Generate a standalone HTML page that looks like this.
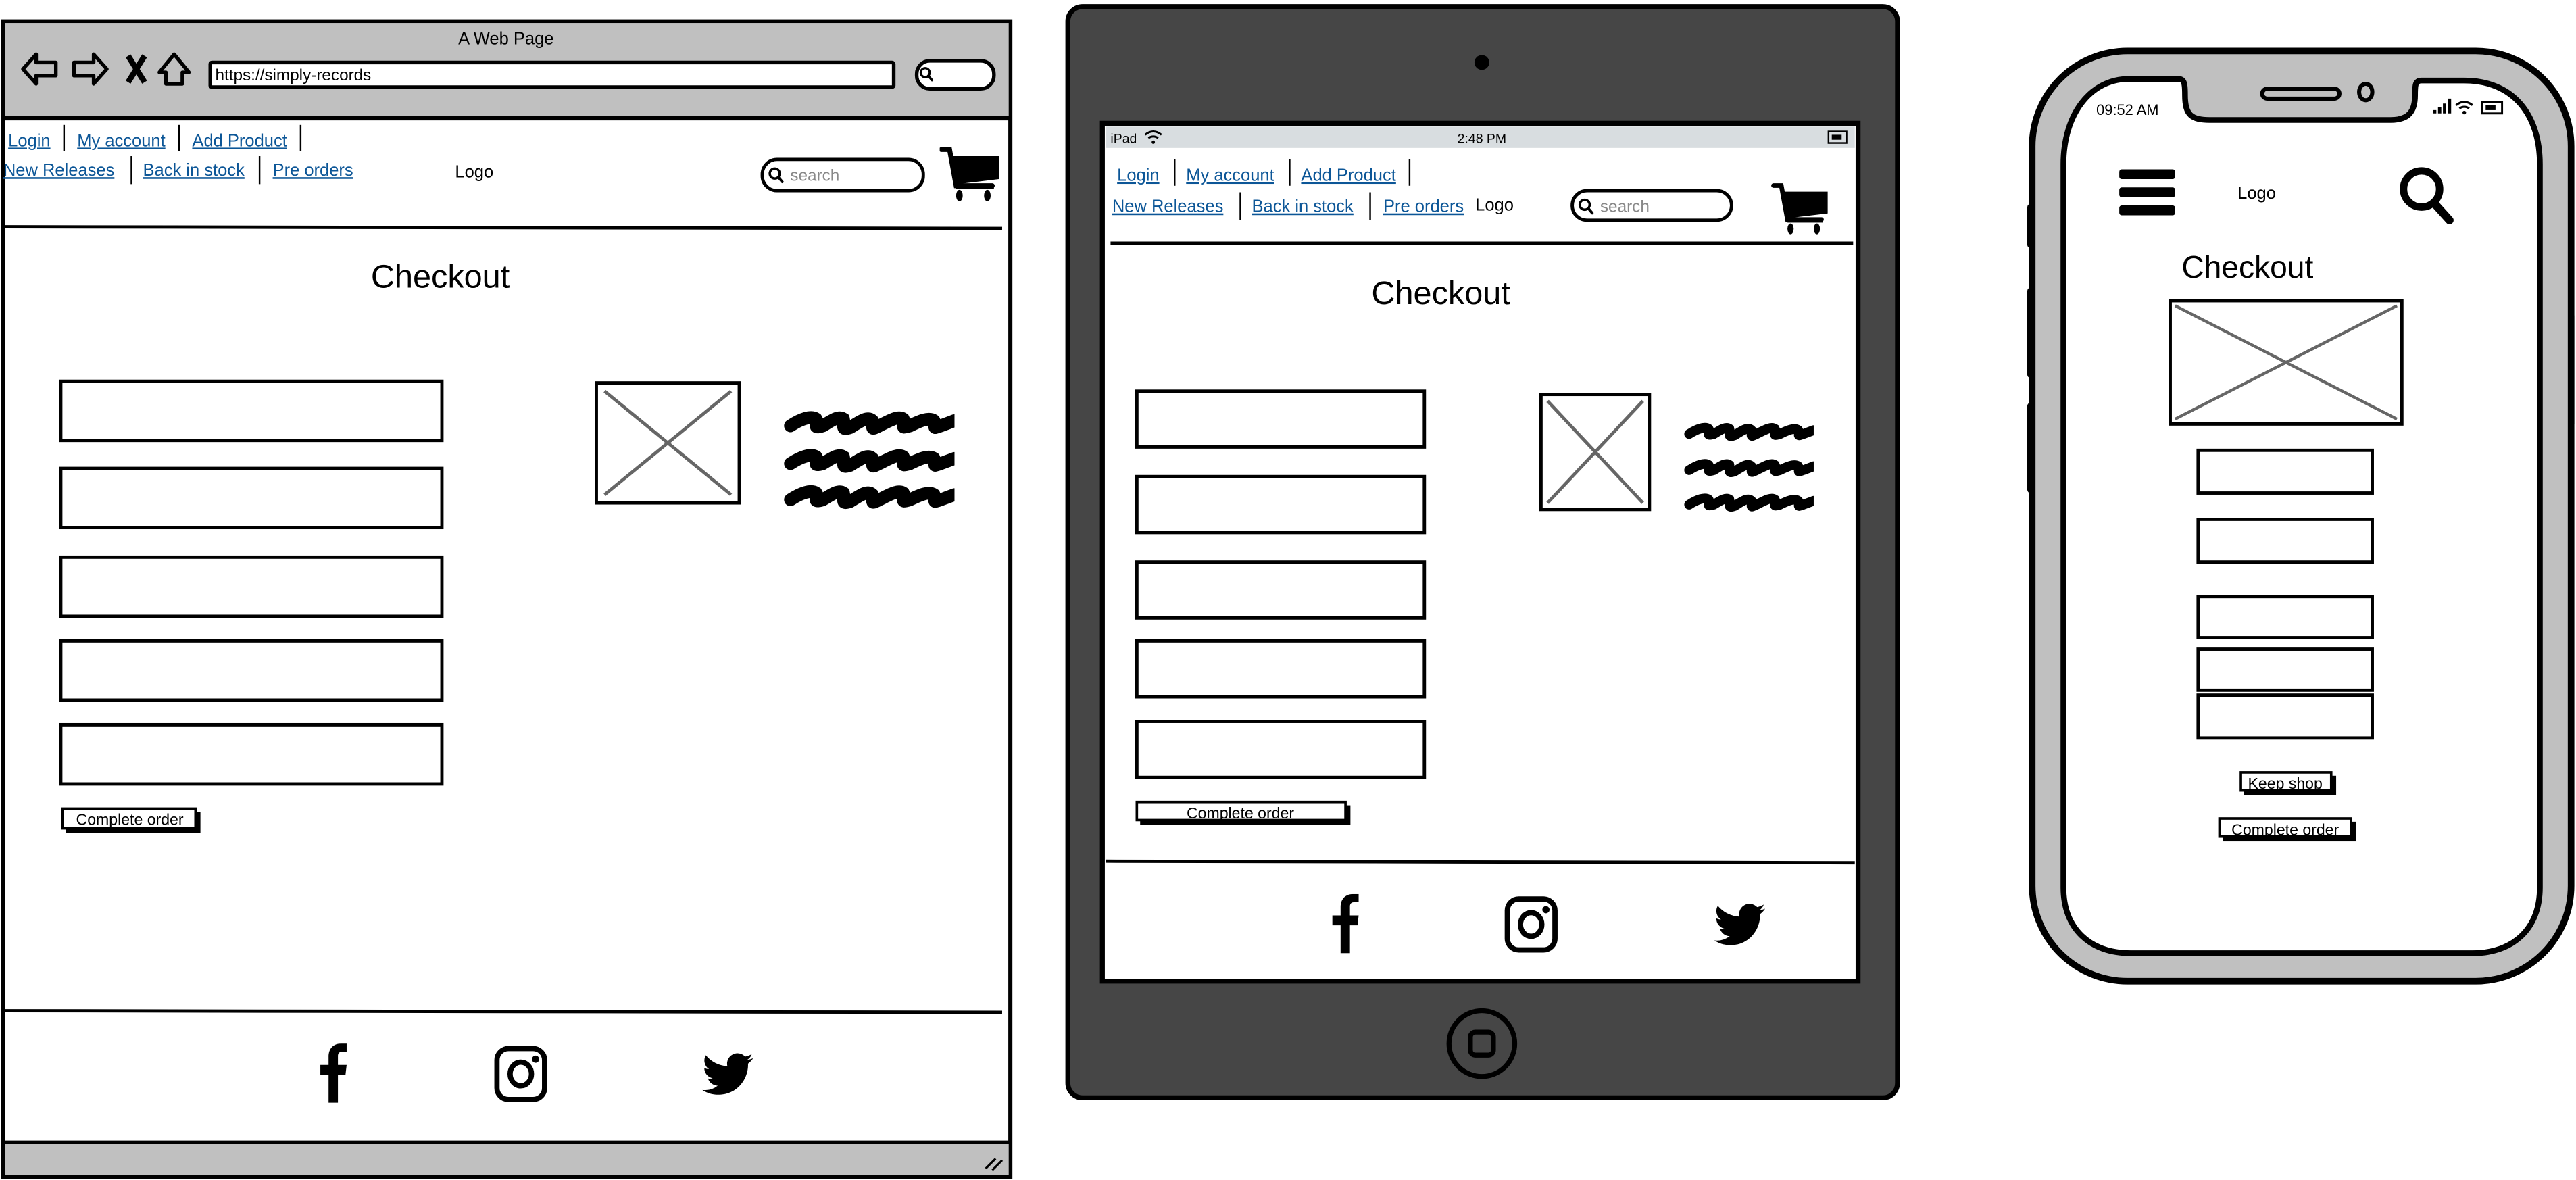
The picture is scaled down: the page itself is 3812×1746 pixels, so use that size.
<!DOCTYPE html>
<html><head><meta charset="utf-8"><style>
html,body{margin:0;padding:0;background:#fff;width:3812px;height:1746px;overflow:hidden}
svg{display:block}
text{font-family:"Liberation Sans",sans-serif}
.lk{fill:#0c5697;font-size:10.5px;text-decoration:underline}
</style></head><body>
<svg width="3812" height="1746" viewBox="0 0 1568 718" preserveAspectRatio="none" xmlns="http://www.w3.org/2000/svg">
<defs>
<symbol id="fb" viewBox="0 0 36 36"><path d="M12 36V19H7v-6h5V8c0-5 3-8 7.5-8H23v5h-3c-1.5 0-2.3 1-2.3 2.5V13H23l-.7 6h-4.6v17z" fill="#000"/></symbol>
<symbol id="ig" viewBox="0 0 36 36"><rect x="3.5" y="2" width="29" height="31" rx="7" fill="none" stroke="#000" stroke-width="3.2"/><ellipse cx="18" cy="17.5" rx="6.5" ry="7.2" fill="none" stroke="#000" stroke-width="3.2"/><circle cx="27" cy="8.5" r="2.2"/></symbol>
<symbol id="tw" viewBox="0 0 24 24"><path d="M23.95 4.57a10 10 0 0 1-2.82.77 4.96 4.96 0 0 0 2.16-2.72c-.95.56-2 .96-3.12 1.19a4.92 4.92 0 0 0-8.38 4.48A13.94 13.94 0 0 1 1.64 3.16a4.92 4.92 0 0 0 1.52 6.57 4.9 4.9 0 0 1-2.23-.61v.06a4.92 4.92 0 0 0 3.95 4.83 4.9 4.9 0 0 1-2.22.08 4.93 4.93 0 0 0 4.6 3.42A9.87 9.87 0 0 1 0 19.54a13.94 13.94 0 0 0 7.55 2.21c9.05 0 14-7.5 14-13.98l-.02-.64a9.9 9.9 0 0 0 2.42-2.56z"/></symbol>
<symbol id="sq" viewBox="0 0 100 14"><path d="M4 9 C10 5 16 3 19 5 C21 8 16 11 23 9 C28 6 32 3 35 5 C36 9 33 12 39 10 C44 7 49 3 52 6 C53 10 50 12 56 9 C62 6 67 3 70 5 C72 9 67 11 74 9 C80 6 85 4 88 6 C90 10 86 11 92 9 L100 6" fill="none" stroke="#000" stroke-width="7.5" stroke-linecap="round"/></symbol>
<symbol id="cart" viewBox="0 0 38 34"><path d="M1 2h5l4 22h22" fill="none" stroke="#000" stroke-width="3" stroke-linecap="round"/><path d="M8 6h28v14l-25 3z"/><ellipse cx="12" cy="30" rx="2" ry="3.5"/><ellipse cx="29" cy="30" rx="2" ry="3.5"/><rect x="10" y="23" width="23" height="3"/></symbol>
<symbol id="mag" viewBox="0 0 12 12"><circle cx="5" cy="5" r="3.3" fill="none" stroke="#000" stroke-width="1.6"/><path d="M7.3 7.3 10 10.5" stroke="#000" stroke-width="1.8" stroke-linecap="round"/></symbol>
</defs>

<!-- ============ BROWSER ============ -->
<rect x="2" y="13" width="613" height="703" fill="#fff" stroke="#000" stroke-width="2.5"/>
<rect x="3" y="14" width="611" height="58" fill="#c0c0c0"/>
<line x1="2" y1="72" x2="615" y2="72" stroke="#000" stroke-width="2.5"/>
<text x="308" y="27" font-size="10.5" text-anchor="middle">A Web Page</text>
<path d="M14 42 L22 33 V38 H34 V46 H22 V51 Z" fill="none" stroke="#000" stroke-width="2.2" stroke-linejoin="round"/>
<path d="M65 42 L57 33 V38 H45 V46 H57 V51 Z" fill="none" stroke="#000" stroke-width="2.2" stroke-linejoin="round"/>
<path d="M78 34 L88 50 M88 34 L78 50" stroke="#000" stroke-width="3.5"/>
<path d="M106 33 L97 44 H101 V51 H111 V44 H115 Z" fill="none" stroke="#000" stroke-width="2.2" stroke-linejoin="round"/>
<rect x="128" y="38" width="416" height="15" rx="1" fill="#fff" stroke="#000" stroke-width="2.2"/>
<text x="131" y="49" font-size="10">https://simply-records</text>
<rect x="558" y="37" width="47" height="17" rx="8" fill="#fff" stroke="#000" stroke-width="2.2"/>
<use href="#mag" x="559" y="40" width="10" height="10"/>
<text x="5" y="89" class="lk">Login</text><line x1="39" y1="76" x2="39" y2="92" stroke="#000"/>
<text x="47" y="89" class="lk">My account</text><line x1="109" y1="76" x2="109" y2="92" stroke="#000"/>
<text x="117" y="89" class="lk">Add Product</text><line x1="183" y1="76" x2="183" y2="92" stroke="#000"/>
<text x="2" y="107" class="lk">New Releases</text><line x1="80" y1="95" x2="80" y2="112" stroke="#000"/>
<text x="87" y="107" class="lk">Back in stock</text><line x1="158" y1="95" x2="158" y2="112" stroke="#000"/>
<text x="166" y="107" class="lk">Pre orders</text>
<text x="277" y="108" font-size="10.5">Logo</text>
<rect x="464" y="97" width="98" height="19" rx="9" fill="#fff" stroke="#000" stroke-width="2"/>
<use href="#mag" x="467" y="101" width="11" height="11"/>
<text x="481" y="110" font-size="10" fill="#888">search</text>
<use href="#cart" x="572" y="89" width="38" height="34"/>
<line x1="3" y1="138" x2="610" y2="139" stroke="#000" stroke-width="2"/>
<text x="268" y="175" font-size="20" text-anchor="middle">Checkout</text>
<g fill="#fff" stroke="#000" stroke-width="2">
<rect x="37" y="232" width="232" height="36"/><rect x="37" y="285" width="232" height="36"/>
<rect x="37" y="339" width="232" height="36"/><rect x="37" y="390" width="232" height="36"/>
<rect x="37" y="441" width="232" height="36"/>
</g>
<rect x="40" y="494" width="82" height="13" fill="#000"/>
<rect x="38" y="492" width="81" height="12" fill="#fff" stroke="#000" stroke-width="1.5"/>
<text x="79" y="502" font-size="9.5" text-anchor="middle">Complete order</text>
<rect x="363" y="233" width="87" height="73" fill="#fff" stroke="#000" stroke-width="2"/>
<path d="M368 238 445 301 M445 238 368 301" stroke="#666" stroke-width="2"/>
<use href="#sq" x="477" y="249" width="104" height="16"/>
<use href="#sq" x="477" y="272" width="104" height="16"/>
<use href="#sq" x="477" y="294" width="104" height="16"/>
<line x1="3" y1="615" x2="610" y2="616" stroke="#000" stroke-width="2"/>
<use href="#fb" x="188" y="635" width="36" height="36"/>
<use href="#ig" x="299" y="636" width="36" height="36"/>
<use href="#tw" x="426" y="638" width="34" height="31"/>
<rect x="3" y="695" width="611" height="20" fill="#c0c0c0"/>
<line x1="2" y1="695" x2="615" y2="695" stroke="#000" stroke-width="2"/>
<path d="M600 711 606 705 M604 712 610 706" stroke="#000" stroke-width="1.3"/>

<!-- ============ TABLET ============ -->
<rect x="650" y="4" width="505" height="664" rx="9" fill="#464646" stroke="#000" stroke-width="3"/>
<circle cx="902" cy="38" r="4.5" fill="#000"/>
<rect x="671" y="75" width="460" height="522" fill="#fff" stroke="#000" stroke-width="3"/>
<rect x="673" y="77" width="456" height="13" fill="#d8dde0"/>
<text x="676" y="87" font-size="8">iPad</text>
<path d="M697 82 Q702 78 707 82 M699 84 Q702 82 705 84" fill="none" stroke="#000" stroke-width="1.2"/><circle cx="702" cy="86.5" r="1"/>
<text x="902" y="87" font-size="8" text-anchor="middle">2:48 PM</text>
<rect x="1113" y="80" width="11" height="7" fill="none" stroke="#000" stroke-width="1"/><rect x="1115" y="82" width="6" height="3"/>
<text x="680" y="110" class="lk">Login</text><line x1="715" y1="97" x2="715" y2="113" stroke="#000"/>
<text x="722" y="110" class="lk">My account</text><line x1="785" y1="97" x2="785" y2="113" stroke="#000"/>
<text x="792" y="110" class="lk">Add Product</text><line x1="858" y1="97" x2="858" y2="113" stroke="#000"/>
<text x="677" y="129" class="lk">New Releases</text><line x1="755" y1="117" x2="755" y2="134" stroke="#000"/>
<text x="762" y="129" class="lk">Back in stock</text><line x1="834" y1="117" x2="834" y2="134" stroke="#000"/>
<text x="842" y="129" class="lk">Pre orders</text>
<text x="898" y="128" font-size="10.5">Logo</text>
<rect x="957" y="116" width="97" height="18" rx="9" fill="#fff" stroke="#000" stroke-width="2"/>
<use href="#mag" x="960" y="120" width="11" height="11"/>
<text x="974" y="129" font-size="10" fill="#888">search</text>
<use href="#cart" x="1078" y="111" width="37" height="32"/>
<line x1="676" y1="148" x2="1128" y2="148" stroke="#000" stroke-width="2"/>
<text x="877" y="185" font-size="20" text-anchor="middle">Checkout</text>
<g fill="#fff" stroke="#000" stroke-width="2">
<rect x="692" y="238" width="175" height="34"/><rect x="692" y="290" width="175" height="34"/>
<rect x="692" y="342" width="175" height="34"/><rect x="692" y="390" width="175" height="34"/>
<rect x="692" y="439" width="175" height="34"/>
</g>
<rect x="694" y="490" width="128" height="12" fill="#000"/>
<rect x="692" y="488" width="127" height="11" fill="#fff" stroke="#000" stroke-width="1.5"/>
<text x="755" y="498" font-size="9.5" text-anchor="middle">Complete order</text>
<rect x="938" y="240" width="66" height="70" fill="#fff" stroke="#000" stroke-width="2"/>
<path d="M942 244 1000 306 M1000 244 942 306" stroke="#666" stroke-width="2"/>
<use href="#sq" x="1025" y="255" width="79" height="15"/>
<use href="#sq" x="1025" y="277" width="79" height="15"/>
<use href="#sq" x="1025" y="298" width="79" height="15"/>
<line x1="673" y1="524" x2="1129" y2="525" stroke="#000" stroke-width="2"/>
<use href="#fb" x="804" y="544" width="36" height="36"/>
<use href="#ig" x="914" y="545" width="36" height="36"/>
<use href="#tw" x="1042" y="547" width="34" height="31"/>
<circle cx="902" cy="635" r="20" fill="none" stroke="#000" stroke-width="3"/>
<rect x="895" y="628" width="14" height="14" rx="3" fill="none" stroke="#000" stroke-width="3"/>

<!-- ============ PHONE ============ -->
<rect x="1234" y="124" width="5" height="27" rx="2" fill="#000"/>
<rect x="1234" y="175" width="5" height="55" rx="2" fill="#000"/>
<rect x="1234" y="245" width="5" height="55" rx="2" fill="#000"/>
<rect x="1562" y="190" width="5" height="70" rx="2" fill="#000"/>
<rect x="1237" y="31" width="328" height="566" rx="58" fill="#c0c0c0" stroke="#000" stroke-width="4"/>
<path d="M1296 48 H1326 C1330 48 1330 52 1330 58 C1330 70 1334 73 1345 73 H1455 C1466 73 1470 68 1470 58 C1470 52 1470 49 1474 49 H1500 C1530 49 1546 70 1546 100 V540 C1546 565 1530 580 1505 580 H1297 C1272 580 1256 565 1256 540 V100 C1256 70 1272 48 1296 48 Z" fill="#fff" stroke="#000" stroke-width="3.5"/>
<rect x="1377" y="54" width="47" height="6" rx="3" fill="none" stroke="#000" stroke-width="2.5"/>
<ellipse cx="1440" cy="56" rx="4" ry="5" fill="none" stroke="#000" stroke-width="2.5"/>
<text x="1276" y="70" font-size="9">09:52 AM</text>
<path d="M1481 69h2v-2h-2zM1484 69h2v-4h-2zM1487 69h2v-6h-2zM1490 69h2v-9h-2z" fill="#000"/>
<path d="M1495 64 Q1500 60 1505 64 M1497 66 Q1500 64 1503 66" fill="none" stroke="#000" stroke-width="1.3"/><circle cx="1500" cy="68.5" r="1.1"/>
<rect x="1511" y="62" width="12" height="7" fill="none" stroke="#000" stroke-width="1.2"/><rect x="1513" y="64" width="6" height="3"/>
<rect x="1290" y="103" width="34" height="6" rx="1.5"/><rect x="1290" y="114" width="34" height="6" rx="1.5"/><rect x="1290" y="125" width="34" height="6" rx="1.5"/>
<text x="1362" y="121" font-size="10.5">Logo</text>
<circle cx="1474" cy="115" r="11" fill="none" stroke="#000" stroke-width="4.5"/>
<path d="M1482 124 1491 134" stroke="#000" stroke-width="5" stroke-linecap="round"/>
<text x="1368" y="169" font-size="19" text-anchor="middle">Checkout</text>
<rect x="1321" y="183" width="141" height="75" fill="#fff" stroke="#000" stroke-width="2"/>
<path d="M1324 186 1459 255 M1459 186 1324 255" stroke="#666" stroke-width="1.8"/>
<g fill="#fff" stroke="#000" stroke-width="2">
<rect x="1338" y="274" width="106" height="26"/><rect x="1338" y="316" width="106" height="26"/>
<rect x="1338" y="363" width="106" height="25"/><rect x="1338" y="395" width="106" height="25"/>
<rect x="1338" y="423" width="106" height="26"/>
</g>
<rect x="1366" y="472" width="56" height="12" fill="#000"/>
<rect x="1364" y="470" width="55" height="11" fill="#fff" stroke="#000" stroke-width="1.5"/>
<text x="1391" y="480" font-size="9.5" text-anchor="middle">Keep shop</text>
<rect x="1353" y="500" width="81" height="12" fill="#000"/>
<rect x="1351" y="498" width="80" height="11" fill="#fff" stroke="#000" stroke-width="1.5"/>
<text x="1391" y="508" font-size="9.5" text-anchor="middle">Complete order</text>
</svg>
</body></html>
